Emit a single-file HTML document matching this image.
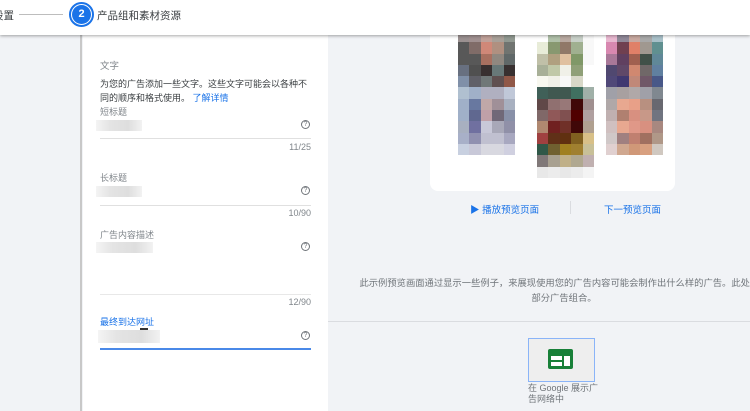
<!DOCTYPE html>
<html><head><meta charset="utf-8"><style>
*{margin:0;padding:0;box-sizing:border-box}
body{width:750px;height:411px;overflow:hidden;position:relative;background:#f1f3f6;font-family:"Liberation Sans","Noto Sans CJK SC",sans-serif;color:#5f6368}
.a{position:absolute;white-space:nowrap}
.hdr{position:absolute;left:0;top:0;width:750px;height:35px;background:#fff;box-shadow:0 1px 3px rgba(0,0,0,.35);z-index:5}
.left{position:absolute;left:0;top:35px;width:82px;height:376px;background:#f1f3f6;border-right:2px solid #c8c8c8}
.panel{position:absolute;left:83px;top:35px;width:245px;height:376px;background:#fff}
.lbl{font-size:9px;color:#80868b}
.blur{position:absolute;height:11px;background:linear-gradient(90deg,#f4f4f4,#e4e4e4 30%,#dedede 70%,#f2f2f2)}
.ln{position:absolute;left:100px;width:211px;height:1px;background:#e0e0e0}
.q{position:absolute;width:9px;height:9px;border:1px solid #70757a;border-radius:50%;font-size:7px;line-height:7px;text-align:center;color:#70757a}
.cnt{font-size:9px;color:#80868b;right:439px}
.g{position:absolute;display:grid;grid-template-columns:repeat(5,11.4px);grid-auto-rows:11.3px}
</style></head><body>
<div class="hdr">
<div class="a" style="left:-7px;top:8px;font-size:10.5px;color:#3c4043">设置</div>
<div class="a" style="left:19px;top:14px;width:44px;height:1px;background:#bdbdbd"></div>
<div class="a" style="left:69px;top:2px;width:25px;height:25px;border-radius:50%;border:2px solid #1a73e8;background:#fff"></div>
<div class="a" style="left:72px;top:5px;width:19px;height:19px;border-radius:50%;background:#1a73e8;color:#fff;font-size:11px;font-weight:bold;text-align:center;line-height:19px">2</div>
<div class="a" style="left:97px;top:8px;font-size:10.5px;color:#3c4043">产品组和素材资源</div>
</div>
<div class="left"></div>
<div class="panel"></div>
<div class="a" style="left:100px;top:58px;font-size:9.5px;color:#80868b">文字</div>
<div class="a" style="left:100px;top:77px;font-size:9px;color:#3c4043;line-height:14px">为您的广告添加一些文字。这些文字可能会以各种不<br>同的顺序和格式使用。 <span style="color:#1a73e8">了解详情</span></div>
<div class="a lbl" style="left:100px;top:105px">短标题</div>
<div class="blur" style="left:96px;top:120px;width:46px"></div>
<div class="q" style="left:301px;top:120px">?</div>
<div class="ln" style="top:138px"></div>
<div class="a cnt" style="top:142px">11/25</div>
<div class="a lbl" style="left:100px;top:171px">长标题</div>
<div class="blur" style="left:96px;top:186px;width:46px"></div>
<div class="q" style="left:301px;top:186px">?</div>
<div class="ln" style="top:205px"></div>
<div class="a cnt" style="top:208px">10/90</div>
<div class="a lbl" style="left:100px;top:228px">广告内容描述</div>
<div class="blur" style="left:96px;top:242px;width:57px"></div>
<div class="q" style="left:301px;top:242px">?</div>
<div class="ln" style="top:294px;background:#e8e8e8"></div>
<div class="a cnt" style="top:297px">12/90</div>
<div class="a" style="left:100px;top:315px;font-size:9px;color:#1a73e8">最终到达网址</div>
<div class="blur" style="left:98px;top:330px;width:62px;height:13px"></div>
<div class="a" style="left:140px;top:328px;width:8px;height:2px;background:#333"></div>
<div class="q" style="left:301px;top:331px">?</div>
<div class="ln" style="top:348px;background:#4a89e8;height:1.5px"></div>

<div class="a" style="left:430px;top:35px;width:245px;height:156px;background:#fff;border-radius:0 0 8px 8px"></div>
<div class="g" style="left:458px;top:31px">
<i style="background:#9a9090"></i><i style="background:#a09090"></i><i style="background:#c0a098"></i><i style="background:#a8a098"></i><i style="background:#909890"></i>
<i style="background:#585858"></i><i style="background:#806c68"></i><i style="background:#d08878"></i><i style="background:#b09080"></i><i style="background:#707470"></i>
<i style="background:#585858"></i><i style="background:#585858"></i><i style="background:#a87060"></i><i style="background:#908880"></i><i style="background:#606868"></i>
<i style="background:#687080"></i><i style="background:#505050"></i><i style="background:#383030"></i><i style="background:#687878"></i><i style="background:#383030"></i>
<i style="background:#8090a8"></i><i style="background:#606068"></i><i style="background:#707878"></i><i style="background:#605050"></i><i style="background:#905848"></i>
<i style="background:#b0c0d0"></i><i style="background:#a0b0c8"></i><i style="background:#b0b0c0"></i><i style="background:#b0b0c0"></i><i style="background:#c0c8d8"></i>
<i style="background:#a0b0c8"></i><i style="background:#6878a0"></i><i style="background:#c0a8a8"></i><i style="background:#a09098"></i><i style="background:#a8b0c0"></i>
<i style="background:#a0b0c8"></i><i style="background:#606890"></i><i style="background:#c0a0a8"></i><i style="background:#706878"></i><i style="background:#8890a8"></i>
<i style="background:#a8b0c0"></i><i style="background:#7070a0"></i><i style="background:#c8c8d8"></i><i style="background:#a8a8b8"></i><i style="background:#9090a8"></i>
<i style="background:#a8b0c8"></i><i style="background:#9090b0"></i><i style="background:#c0c0d0"></i><i style="background:#c0c0d0"></i><i style="background:#a8a8c0"></i>
<i style="background:#c8d0e0"></i><i style="background:#c8c8d8"></i><i style="background:#d8d8e0"></i><i style="background:#d8d8e0"></i><i style="background:#d0d0e0"></i>
</div>
<div class="g" style="left:537px;top:31px">
<i style="background:#fff"></i><i style="background:#b0c0a8"></i><i style="background:#b8a8a0"></i><i style="background:#c8d0c8"></i><i style="background:#f8f8f8"></i>
<i style="background:#e8ecd8"></i><i style="background:#889870"></i><i style="background:#907868"></i><i style="background:#a0b090"></i><i style="background:#f8f8f8"></i>
<i style="background:#c0c0a8"></i><i style="background:#b0a080"></i><i style="background:#e0c0a0"></i><i style="background:#809868"></i><i style="background:#f8f8f8"></i>
<i style="background:#a8b098"></i><i style="background:#c0c8a8"></i><i style="background:#f0f0e8"></i><i style="background:#90a078"></i><i style="background:#fff"></i>
<i style="background:#f8f8f0"></i><i style="background:#f0f0e8"></i><i style="background:#f8f8f8"></i><i style="background:#d8d8c8"></i><i style="background:#fff"></i>
<i style="background:#406058"></i><i style="background:#405850"></i><i style="background:#405850"></i><i style="background:#407060"></i><i style="background:#a0b0a8"></i>
<i style="background:#604848"></i><i style="background:#907070"></i><i style="background:#987878"></i><i style="background:#400808"></i><i style="background:#a09090"></i>
<i style="background:#806868"></i><i style="background:#905858"></i><i style="background:#805050"></i><i style="background:#500000"></i><i style="background:#b0a0a0"></i>
<i style="background:#b08870"></i><i style="background:#702020"></i><i style="background:#703028"></i><i style="background:#400808"></i><i style="background:#b0a090"></i>
<i style="background:#a04040"></i><i style="background:#603018"></i><i style="background:#603010"></i><i style="background:#806020"></i><i style="background:#d8c088"></i>
<i style="background:#305848"></i><i style="background:#706030"></i><i style="background:#a08020"></i><i style="background:#a08030"></i><i style="background:#c8c098"></i>
<i style="background:#807878"></i><i style="background:#a8a090"></i><i style="background:#c0b088"></i><i style="background:#b0a890"></i><i style="background:#c0b0b0"></i>
<i style="background:#e8e8e8"></i><i style="background:#ececec"></i><i style="background:#e8e8e8"></i><i style="background:#ececec"></i><i style="background:#f4f4f4"></i>
</div>
<div class="g" style="left:606px;top:31px">
<i style="background:#e8b8d0"></i><i style="background:#908898"></i><i style="background:#c8a8a0"></i><i style="background:#a8a8a8"></i><i style="background:#a8c0c8"></i>
<i style="background:#d888b0"></i><i style="background:#704050"></i><i style="background:#e08068"></i><i style="background:#a09890"></i><i style="background:#609090"></i>
<i style="background:#a87898"></i><i style="background:#604060"></i><i style="background:#a06050"></i><i style="background:#405048"></i><i style="background:#608898"></i>
<i style="background:#504870"></i><i style="background:#604868"></i><i style="background:#d08870"></i><i style="background:#706868"></i><i style="background:#6080a0"></i>
<i style="background:#504878"></i><i style="background:#403870"></i><i style="background:#c08878"></i><i style="background:#705868"></i><i style="background:#485888"></i>
<i style="background:#a0a0a8"></i><i style="background:#a8a0a0"></i><i style="background:#b0a8a8"></i><i style="background:#a0a0a8"></i><i style="background:#808890"></i>
<i style="background:#b0a8a8"></i><i style="background:#e8a890"></i><i style="background:#e8a088"></i><i style="background:#b89080"></i><i style="background:#686870"></i>
<i style="background:#c0b0b0"></i><i style="background:#b08070"></i><i style="background:#d89080"></i><i style="background:#c89888"></i><i style="background:#707480"></i>
<i style="background:#d0c0c0"></i><i style="background:#e8a890"></i><i style="background:#e09888"></i><i style="background:#d89080"></i><i style="background:#a88880"></i>
<i style="background:#d0c8c8"></i><i style="background:#a08080"></i><i style="background:#c08070"></i><i style="background:#a07060"></i><i style="background:#b09888"></i>
<i style="background:#e0d0d0"></i><i style="background:#d0a890"></i><i style="background:#d09878"></i><i style="background:#d8a080"></i><i style="background:#d0c8c0"></i>
</div>

<div class="a" style="left:470px;top:202px;font-size:9.5px;color:#1a73e8">▶ 播放预览页面</div>
<div class="a" style="left:570px;top:201px;width:1px;height:13px;background:#dadce0"></div>
<div class="a" style="left:604px;top:202px;font-size:9.5px;color:#1a73e8">下一预览页面</div>
<div class="a" style="left:354px;top:276px;width:420px;font-size:9.3px;line-height:15px;color:#70757a;text-align:center;white-space:normal">此示例预览画面通过显示一些例子，来展现使用您的广告内容可能会制作出什么样的广告。此处仅显<br>部分广告组合。</div>
<div class="a" style="left:328px;top:321px;width:422px;height:1px;background:#dadce0"></div>
<div class="a" style="left:528px;top:338px;width:67px;height:44px;background:#eee;border:1.5px solid #8ab4f8"></div>
<svg class="a" style="left:547px;top:348px" width="28" height="24"><rect x="1" y="1" width="25" height="20" rx="2" fill="#188038"/><rect x="4" y="8" width="11" height="4" fill="#fff"/><rect x="4" y="14" width="11" height="4" fill="#fff"/><rect x="17" y="8" width="6" height="10" fill="#fff"/></svg>
<div class="a" style="left:528px;top:383px;font-size:9px;line-height:11px;color:#70757a">在 Google 展示广<br>告网络中</div>
</body></html>
